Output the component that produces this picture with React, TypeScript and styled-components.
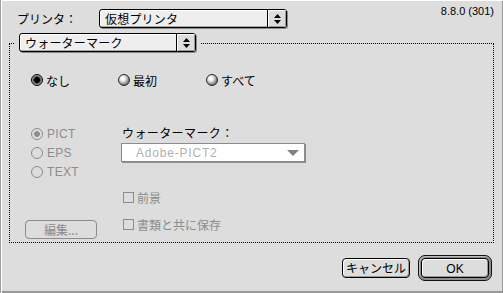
import React from "react";
import styled, { createGlobalStyle, css } from "styled-components";

const GlobalStyle = createGlobalStyle`
  html, body { margin: 0; padding: 0; background: #dddddd; }
  * { box-sizing: border-box; }
`;

const JP = `"Noto Sans CJK JP", "Noto Sans", sans-serif`;
const LATIN = `"Liberation Sans", Arial, sans-serif`;

const Window = styled.div`
  width: 503px;
  height: 293px;
  background: #dddddd;
  font-family: ${JP};
  font-size: 12px;
  color: #000;
  display: flex;
  flex-direction: column;
  overflow: hidden;
  box-shadow: inset 1px 0 0 #a0a0a0, inset 2px 1px 0 #ffffff,
    inset -1px -2px 0 #999999;
`;

const Header = styled.div`
  display: flex;
  align-items: flex-start;
  padding: 5px 9px 0 17px;
`;

const FieldRow = styled.div`
  display: flex;
  align-items: center;
  margin-top: 4px;
`;

const FieldLabel = styled.span`
  width: 82px;
  line-height: 19px;
  white-space: nowrap;
`;

const Version = styled.span`
  margin-left: auto;
  font-family: ${LATIN};
  font-size: 11px;
  line-height: 13px;
`;

const PopupBox = styled.div<{ $w: number }>`
  width: ${(p) => p.$w}px;
  height: 19px;
  display: flex;
  border: 1px solid #000;
  border-radius: 3px;
  background: #eeeeee;
  box-shadow: 1px 1px 0 #8a8a8a, inset 1px 1px 0 #ffffff,
    inset -1px -1px 0 #aaaaaa;
  overflow: hidden;
`;

const PopupText = styled.span`
  flex: 1;
  padding-left: 5px;
  line-height: 17px;
  white-space: nowrap;
  letter-spacing: 0.2px;
`;

const PopupArrowCell = styled.span`
  width: 19px;
  border-left: 1px solid #000;
  background: #dddddd;
  box-shadow: inset 1px 1px 0 #ffffff, inset -1px -1px 0 #999999;
  display: flex;
  align-items: center;
  justify-content: center;
`;

const Stepper = () => (
  <svg width="7" height="10" viewBox="0 0 7 10">
    <path d="M3.5 0 L7 4 L0 4 Z" fill="#000" />
    <path d="M0 6 L7 6 L3.5 10 Z" fill="#000" />
  </svg>
);

const Popup = ({ w, children }: { w: number; children: React.ReactNode }) => (
  <PopupBox $w={w}>
    <PopupText>{children}</PopupText>
    <PopupArrowCell>
      <Stepper />
    </PopupArrowCell>
  </PopupBox>
);

const Group = styled.fieldset`
  margin: 5px 9px 0 9px;
  padding: 0 4px 3px 4px;
  border: 1px dotted #000;
  min-width: 0;
`;

const GroupLegend = styled.legend`
  padding: 0 5px 1px 5px;
  line-height: 0;
`;

const Body = styled.div`
  display: flex;
  flex-direction: column;
`;

const RadioRow = styled.div`
  display: flex;
  align-items: center;
  height: 16px;
  margin: 19px 0 0 17px;
`;

const RadioItem = styled.label<{ $w?: number; $disabled?: boolean }>`
  display: flex;
  align-items: center;
  gap: 3px;
  width: ${(p) => (p.$w ? `${p.$w}px` : "auto")};
  white-space: nowrap;
  color: ${(p) => (p.$disabled ? "#8c8c8c" : "#000")};
`;

type RadioKind = "on" | "off" | "disOn" | "disOff";

const RadioDot = styled.span<{ $kind: RadioKind }>`
  width: 12px;
  height: 12px;
  border-radius: 50%;
  flex: none;
  ${(p) =>
    p.$kind === "on" &&
    css`
      border: 1px solid #000;
      background: radial-gradient(
        circle at 50% 50%,
        #000 0 2.6px,
        #4a4a4a 3.2px,
        #8a8a8a 4.4px,
        #b5b5b5 5px
      );
    `}
  ${(p) =>
    p.$kind === "off" &&
    css`
      border: 1px solid #2a2a2a;
      background: radial-gradient(
        circle at 38% 35%,
        #ffffff 0 1.4px,
        #e4e4e4 2.6px,
        #b4b4b4 4.5px,
        #7a7a7a 6px
      );
    `}
  ${(p) =>
    p.$kind === "disOn" &&
    css`
      border: 1px solid #8c8c8c;
      background: radial-gradient(circle, #8c8c8c 0 2.6px, #dddddd 3.1px);
    `}
  ${(p) =>
    p.$kind === "disOff" &&
    css`
      border: 1px solid #8c8c8c;
      background: #dddddd;
    `}
`;

const LatinText = styled.span`
  font-family: ${LATIN};
  font-size: 12px;
  letter-spacing: 0.3px;
`;

const Options = styled.div`
  display: grid;
  grid-template-columns: 96px 1fr;
  height: 116px;
  margin: 35px 0 0 11px;
`;

const LeftColumn = styled.div`
  display: flex;
  flex-direction: column;
`;

const RadioList = styled.div`
  display: flex;
  flex-direction: column;
  padding: 1px 0 0 6px;
`;

const ListRow = styled.div`
  height: 19px;
  display: flex;
  align-items: center;
`;

const ListItem = styled(RadioItem)`
  gap: 4px;
`;

const RightColumn = styled.div`
  display: flex;
  flex-direction: column;
`;

const SectionLabel = styled.div`
  height: 20px;
  line-height: 20px;
  padding-left: 1px;
  letter-spacing: 0.4px;
`;

const DisabledPopup = styled.div`
  width: 184px;
  height: 19px;
  display: flex;
  align-items: center;
  background: #ffffff;
  border: 1px solid #8c8c8c;
  box-shadow: 1px 1px 0 #8c8c8c;
  padding: 0 5px 0 14px;
`;

const DisabledPopupText = styled.span`
  flex: 1;
  font-family: ${LATIN};
  font-size: 12px;
  letter-spacing: 0.8px;
  color: #b0b0b0;
`;

const CheckRow = styled.label<{ $mt: number }>`
  display: flex;
  align-items: center;
  gap: 3px;
  height: 16px;
  margin-top: ${(p) => p.$mt}px;
  padding-left: 2px;
  color: #8c8c8c;
  white-space: nowrap;
`;

const CheckBox = styled.span`
  width: 11px;
  height: 11px;
  border: 1px solid #8c8c8c;
  background: #dddddd;
  flex: none;
`;

const EditButton = styled.button`
  margin-top: auto;
  width: 72px;
  height: 19px;
  padding: 0;
  border: 1px solid #8c8c8c;
  border-radius: 4px;
  background: #dddddd;
  color: #8c8c8c;
  font-family: ${JP};
  font-size: 12px;
  line-height: 17px;
`;

const Footer = styled.div`
  display: flex;
  justify-content: flex-end;
  align-items: center;
  gap: 8px;
  margin-top: 12px;
  padding-right: 11px;
`;

const PushButton = styled.button`
  width: 68px;
  height: 20px;
  padding: 0;
  border: 1px solid #000;
  border-radius: 4px;
  background: #dddddd;
  box-shadow: inset 1px 1px 0 #ffffff, inset -1px -1px 0 #999999;
  color: #000;
  font-family: ${JP};
  font-size: 12px;
  line-height: 18px;
  white-space: nowrap;
`;

const LatinButtonText = styled.span`
  font-family: ${LATIN};
  font-size: 12px;
`;

const DefaultRing = styled.div`
  display: flex;
  padding: 2px;
  border: 1px solid #111;
  border-radius: 7px;
  background: #8e8e8e;
  box-shadow: inset 1px 1px 0 #bdbdbd;
`;

export default function App() {
  return (
    <>
      <GlobalStyle />
      <Window>
        <Header>
          <FieldRow>
            <FieldLabel>プリンタ：</FieldLabel>
            <Popup w={188}>仮想プリンタ</Popup>
          </FieldRow>
          <Version>8.8.0 (301)</Version>
        </Header>

        <Group>
          <GroupLegend>
            <Popup w={177}>ウォーターマーク</Popup>
          </GroupLegend>
          <Body>
            <RadioRow>
              <RadioItem $w={87}>
                <RadioDot $kind="on" />
                なし
              </RadioItem>
              <RadioItem $w={88}>
                <RadioDot $kind="off" />
                最初
              </RadioItem>
              <RadioItem>
                <RadioDot $kind="off" />
                すべて
              </RadioItem>
            </RadioRow>

            <Options>
              <LeftColumn>
                <RadioList>
                  <ListRow>
                    <ListItem $disabled>
                      <RadioDot $kind="disOn" />
                      <LatinText>PICT</LatinText>
                    </ListItem>
                  </ListRow>
                  <ListRow>
                    <ListItem $disabled>
                      <RadioDot $kind="disOff" />
                      <LatinText>EPS</LatinText>
                    </ListItem>
                  </ListRow>
                  <ListRow>
                    <ListItem $disabled>
                      <RadioDot $kind="disOff" />
                      <LatinText>TEXT</LatinText>
                    </ListItem>
                  </ListRow>
                </RadioList>
                <EditButton>編集...</EditButton>
              </LeftColumn>

              <RightColumn>
                <SectionLabel>ウォーターマーク：</SectionLabel>
                <DisabledPopup>
                  <DisabledPopupText>Adobe-PICT2</DisabledPopupText>
                  <svg width="12" height="6" viewBox="0 0 12 6">
                    <path d="M0 0 L12 0 L6 6 Z" fill="#808080" />
                  </svg>
                </DisabledPopup>
                <CheckRow $mt={27}>
                  <CheckBox />
                  前景
                </CheckRow>
                <CheckRow $mt={11}>
                  <CheckBox />
                  書類と共に保存
                </CheckRow>
              </RightColumn>
            </Options>
          </Body>
        </Group>

        <Footer>
          <PushButton>キャンセル</PushButton>
          <DefaultRing>
            <PushButton>
              <LatinButtonText>OK</LatinButtonText>
            </PushButton>
          </DefaultRing>
        </Footer>
      </Window>
    </>
  );
}
